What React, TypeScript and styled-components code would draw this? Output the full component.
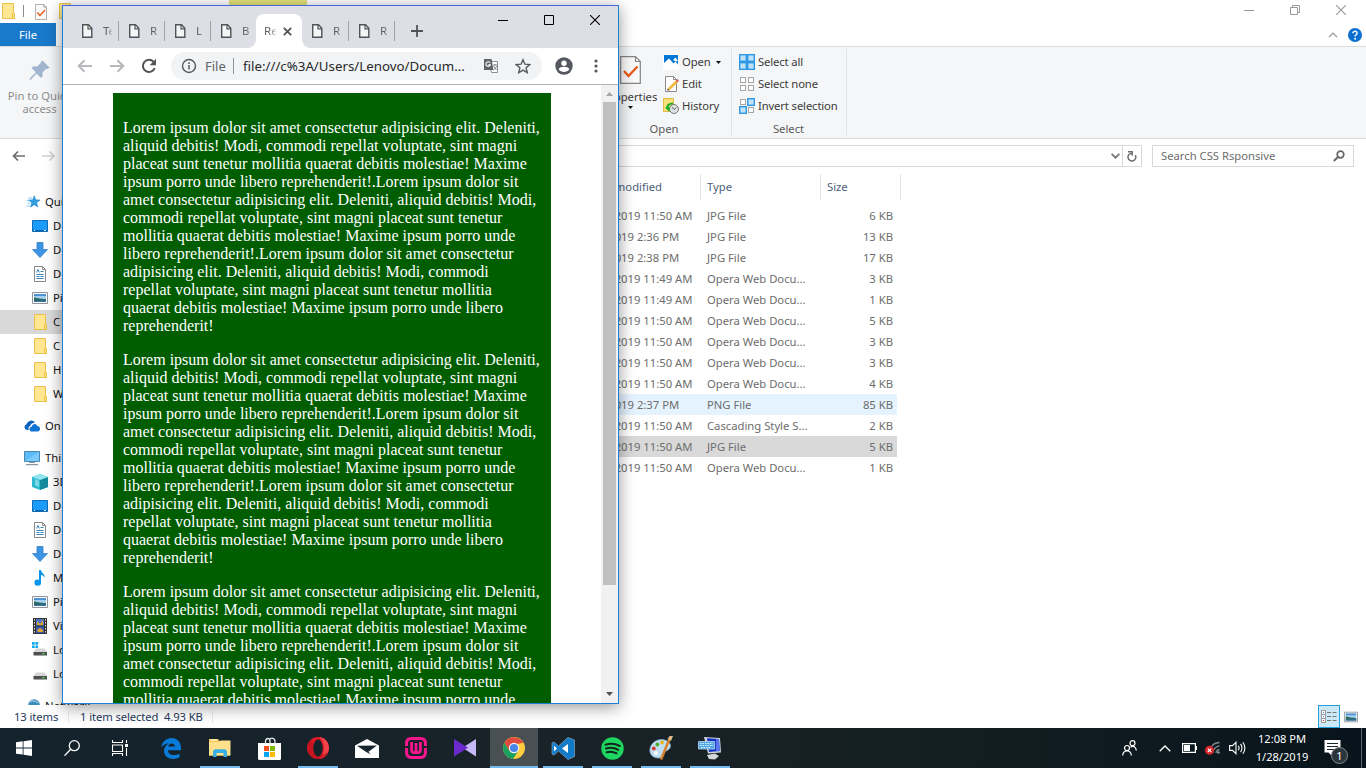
import React from 'react';
import styled, { createGlobalStyle, css } from 'styled-components';

const Global = createGlobalStyle`
  * { box-sizing: border-box; }
  body { margin: 0; overflow: hidden; background: #fff; }
  svg { display: block; flex: none; }
`;

const Desktop = styled.div`
  position: relative; width: 1366px; height: 768px; overflow: hidden;
  display: flex; flex-direction: column;
  font: 11.25px/16px 'Noto Sans', sans-serif; color: #222;
`;

/* ---------- file explorer ---------- */
const Explorer = styled.div`height: 728px; display: flex; flex-direction: column; background: #fff;`;
const TitleBar = styled.div`height: 23px; display: flex; justify-content: space-between; flex: none;`;
const QuickBar = styled.div`display: flex; align-items: flex-start; padding: 3px 0 0 0;`;
const QuickDivider = styled.div`width: 1px; height: 12px; margin: 2px 11px 0 7px; background: #8b8b8b;`;
const CheckHolder = styled.div`margin: 1px 10px 0 0;`;
const ContextTab = styled.div`width: 78px; height: 22px; margin: -3px 0 0 156px; background: #e2e278;`;
const CaptionButtons = styled.div<{ $h: number; $right: number }>`
  display: flex; height: ${p => p.$h}px; margin-right: ${p => p.$right}px;
`;
const Caption = styled.div`width: 46px; display: flex; align-items: center; justify-content: center;`;
const TabRow = styled.div`
  height: 24px; display: flex; justify-content: space-between; border-bottom: 1px solid #dadbdc; flex: none;
`;
const FileTab = styled.div`
  width: 56px; height: 23px; background: #1979ca; color: #fff; text-align: center; line-height: 23px;
`;
const HelpArea = styled.div`display: flex; align-items: center; gap: 10px; padding-right: 4px;`;
const Ribbon = styled.div`
  height: 92px; flex: none; display: flex; background: #f5f6f7; border-bottom: 1px solid #dadbdc; color: #3b3b3b;
`;
const PinButton = styled.div`
  width: 78px; padding: 13px 0 0 1px; display: flex; flex-direction: column; align-items: center;
  text-align: center; color: #8e8e8e; line-height: 13px;
  svg { margin-bottom: 8px; }
`;
const PinLabel = styled.div`white-space: nowrap;`;
const RibbonSpacer = styled.div`width: 519px;`;
const Group = styled.div<{ $w: number; $pad: number }>`
  position: relative; width: ${p => p.$w}px; margin: 2px 0 3px; padding: 2px 0 0 ${p => p.$pad}px;
  border-right: 1px solid #e2e3e4; display: grid; grid-template: 69px 18px / auto 1fr;
`;
const BigButton = styled.div`
  width: 54px; display: flex; flex-direction: column; align-items: center; padding-top: 5px; line-height: 17px;
  svg:first-child { margin-bottom: 4px; }
  svg:last-child { margin-top: 1px; }
`;
const SmallList = styled.div<{ $left: number }>`padding-left: ${p => p.$left}px;`;
const SmallButton = styled.div`height: 22px; display: flex; align-items: center; gap: 3px; white-space: nowrap; letter-spacing: -.12px;
  svg + span + svg { margin-left: 2px; }
`;
const GroupLabel = styled.div<{ $shift: number }>`
  grid-column: 1 / 3; margin-left: ${p => -p.$shift}px; text-align: center; color: #5a5a5a; line-height: 17px;
`;
const AddressRow = styled.div`height: 34px; flex: none; display: flex; padding: 6px 12px 0 0;`;
const NavArrows = styled.div`width: 74px; display: flex; gap: 14px; padding: 3px 0 0 12px;`;
const AddressBox = styled.div`
  flex: 1; height: 22px; border: 1px solid #d9d9d9; display: flex; align-items: center; justify-content: flex-end;
`;
const RefreshCell = styled.div`
  width: 19px; height: 20px; margin-left: 2px; border-left: 1px solid #d9d9d9; display: flex; align-items: center; justify-content: center;
`;
const SearchBox = styled.div`
  width: 202px; height: 22px; margin-left: 10px; border: 1px solid #d9d9d9; padding: 0 8px 0 8px; color: #6d6d6d;
  display: flex; align-items: center; justify-content: space-between;
`;
const Body = styled.div`flex: 1; min-height: 0; display: flex; overflow: hidden;`;
const Sidebar = styled.div`width: 200px; padding-top: 17px; flex: none; color: #111;`;
const SideGroup = styled.div`margin-bottom: 8px;`;
const SideItem = styled.div<{ $root?: boolean; $on?: boolean }>`
  height: 24px; display: flex; align-items: center; gap: 5px; white-space: nowrap;
  padding-left: ${p => (p.$root ? 24 : 32)}px; background: ${p => (p.$on ? '#d9d9d9' : 'transparent')};
`;
const FileList = styled.div`width: 701px; flex: none;`;
const rowGrid = css`display: grid; grid-template-columns: 380px 120px 120px 77px;`;
const HeadRow = styled.div`${rowGrid} grid-template-columns: 381px 120px 120px 80px; height: 32px; padding: 1px 0 6px; color: #4c607a; line-height: 26px;`;
const HeadCell = styled.div`border-right: 1px solid #e2e2e2; padding-left: 6px;`;
const FileRow = styled.div<{ $bg?: string }>`
  ${rowGrid} width: 697px; height: 21px; line-height: 22px; color: #6d6d6d; background: ${p => p.$bg || 'transparent'};
  white-space: nowrap;
`;
const Cell = styled.div<{ $right?: boolean }>`
  padding: 0 4px 0 7px; text-align: ${p => (p.$right ? 'right' : 'left')};
`;
const StatusBar = styled.div`height: 23px; flex: none; display: flex; align-items: center; color: #1e395b; padding: 0 8px 0 14px;`;
const StatusText = styled.div<{ $w: number }>`width: ${p => p.$w}px; white-space: nowrap; letter-spacing: -.1px;`;
const StatusLine = styled.div`width: 1px; height: 12px; background: #e8e8e8; margin-right: 11px;`;
const ViewButtons = styled.div`margin-left: auto; display: flex; align-items: center; gap: 4px;`;
const DetailsView = styled.div`
  width: 22px; height: 23px; border: 1px solid #26a0da; background: #cbe8f6; display: flex; align-items: center; justify-content: center;
`;

/* ---------- browser window ---------- */
const Browser = styled.div`
  position: absolute; left: 62px; top: 5px; width: 557px; height: 699px; background: #fff;
  border: 1px solid #1b81d8; border-top-color: #4169dc; box-shadow: 0 3px 15px rgba(0, 0, 0, .42);
  display: flex; flex-direction: column;
`;
const TabStrip = styled.div`height: 42px; flex: none; display: flex; background: #dddee6; padding-left: 9px;`;
const Tab = styled.div<{ $line?: boolean }>`
  width: 46px; height: 20px; margin-top: 15px; padding-left: 10px; display: flex; align-items: center; gap: 10px;
  border-left: ${p => (p.$line ? '1px solid #a0a2a8' : '0')};
`;
const TabTitle = styled.div<{ $w?: number }>`
  width: ${p => p.$w || 9}px; overflow: hidden; font-size: 11.5px; color: #5f6368;
  mask-image: linear-gradient(90deg, #000 50%, transparent 110%);
`;
const ActiveTab = styled.div`
  position: relative; width: 46px; margin-top: 8px; height: 34px; background: #fff; border-radius: 8px 8px 0 0;
  display: flex; align-items: center; padding-left: 8px; gap: 7px; color: #3c4043;
  &::before, &::after {
    content: ''; position: absolute; bottom: 0; width: 8px; height: 8px;
  }
  &::before { left: -8px; background: radial-gradient(circle at 0 0, transparent 7.5px, #fff 8px); }
  &::after { right: -8px; background: radial-gradient(circle at 100% 0, transparent 7.5px, #fff 8px); }
`;
const NewTab = styled.div`
  height: 20px; margin-top: 15px; border-left: 1px solid #a0a2a8; padding-left: 16px; display: flex; align-items: center; flex: 1;
`;
const Toolbar = styled.div`
  height: 37px; flex: none; display: flex; align-items: center; border-bottom: 1px solid #b4b4b4; padding-left: 14px;
`;
const NavIcons = styled.div`display: flex; gap: 16px; width: 94px;`;
const Omnibox = styled.div`
  width: 371px; height: 28px; border-radius: 14px; background: #f1f3f4; display: flex; align-items: center;
  padding: 0 10px; font-size: 13.3px; white-space: nowrap; color: #27292c;
`;
const Scheme = styled.div`width: 28px; margin-left: 8px; color: #5f6368; font-size: 13px;`;
const SchemeLine = styled.div`width: 1px; height: 16px; background: #8f9296; margin-right: 9px;`;
const Url = styled.div`width: 241px;`;
const OmniIcons = styled.div`display: flex; align-items: center; gap: 17px;`;
const RightIcons = styled.div`display: flex; align-items: center; gap: 14px; margin-left: 13px;`;
const DotsWrap = styled.div`padding-left: 7px;`;
const Page = styled.div`flex: 1; min-height: 0; display: flex; overflow: hidden;`;
const PageBody = styled.div`flex: 1; overflow: hidden; padding: 8px 50px 0;`;
const Article = styled.div`
  background: #005d00; color: #fff; padding: 10px 10.8px 10px 10px; font: 16px/18px 'Liberation Serif', serif; height: 760px;
  p { margin: 16px 0; }
`;
const Scroll = styled.div`
  width: 17px; background: #f1f1f1; display: flex; flex-direction: column; align-items: center; justify-content: space-between; padding: 7px 0 7px;
`;
const Thumb = styled.div`width: 13px; height: 483px; background: #c1c1c1; margin: 6px 0 auto;`;

/* ---------- taskbar ---------- */
const Taskbar = styled.div`
  height: 40px; flex: none; display: flex; background: linear-gradient(90deg, #14232d, #192227 45%, #152023 65%, #07141b);
`;
const Slots = styled.div`display: flex; margin-right: 3px;`;
const Apps = styled.div`display: flex; gap: 1px;`;
const Slot = styled.div<{ $open?: boolean; $active?: boolean }>`
  width: 48px; height: 40px; display: flex; align-items: center; justify-content: center;
  background:
    linear-gradient(#76b9ed, #76b9ed) center bottom / ${p => (p.$active ? '48px' : p.$open ? '40px' : '0')} 2px no-repeat
    ${p => (p.$active ? '#485054' : 'transparent')};
`;
const Tray = styled.div`margin-left: auto; display: flex; align-items: center; color: #fff;`;
const TrayItem = styled.div<{ $w: number }>`width: ${p => p.$w}px; display: flex; justify-content: center;`;
const Clock = styled.div`width: 66px; text-align: center; line-height: 18px; font-size: 11.1px;`;
const ShowDesktop = styled.div`width: 5px; height: 40px; border-left: 1px solid #5d666b; margin-left: 2px;`;

/* ---------- icons ---------- */
type IconProps = { w?: number; h?: number; box?: string; children: React.ReactNode };
const Icon = ({ w = 16, h, box, children }: IconProps) => (
  <svg width={w} height={h ?? w} viewBox={box ?? `0 0 ${w} ${h ?? w}`} fill="none">{children}</svg>
);

const Folder = () => (
  <Icon w={16}>
    <path d="M2.5.5h11v9l1 1v5h-12z" fill="#ffe693" stroke="#e9c24a" />
    <path d="M12.5 15.5v-5l1-1 1 1v5z" fill="#ffdf7a" stroke="#e9c24a" />
  </Icon>
);
const PageCheck = ({ w, h }: { w: number; h: number }) => (
  <Icon w={w} h={h} box="0 0 21 28">
    <path d="M.7.7h14.8l4.8 4.8v21.8H.7z" fill="#fafafa" stroke="#858585" strokeWidth="1.2" />
    <path d="M15.5.7v4.8h4.8" stroke="#858585" strokeWidth="1.2" />
    <path d="M4 15l4.5 5L17.5 10.5" stroke="#ea5b17" strokeWidth="2.4" />
  </Icon>
);
const Minimize = ({ c }: { c: string }) => <Icon w={10}><path d="M0 5.5h10" stroke={c} /></Icon>;
const Close = ({ c }: { c: string }) => <Icon w={10}><path d="M0 0l10 10M10 0L0 10" stroke={c} strokeWidth="1.1" /></Icon>;
const Restore = () => (
  <Icon w={10}><path d="M.5 2.5h7v7h-7zM2.5 2.5v-2h7v7h-2" stroke="#999" /></Icon>
);
const Maximize = () => <Icon w={10}><path d="M.5.5h9v9h-9z" stroke="#000" /></Icon>;
const Arrow = ({ c, flip }: { c: string; flip?: boolean }) => (
  <Icon w={16}>
    <path d={flip ? 'M1 8h13M8.5 2.2L14.3 8l-5.8 5.8' : 'M15 8H2M7.5 2.2L1.7 8l5.8 5.8'} stroke={c} strokeWidth="2" />
  </Icon>
);
const SlimArrow = ({ c, flip }: { c: string; flip?: boolean }) => (
  <Icon w={15} h={16}>
    <path d={flip ? 'M1 8h12M8.5 3.5L13 8l-4.5 4.5' : 'M13 8H1.500M6 3.5L1.500 8L6 12.500'} stroke={c} strokeWidth="1.7" />
  </Icon>
);
const Triangle = ({ c, up }: { c: string; up?: boolean }) => (
  <Icon w={7} h={4}><path d={up ? 'M0 4h7L3.5 0z' : 'M0 0h7L3.5 4z'} fill={c} /></Icon>
);
const SmallTri = () => <Icon w={5} h={3}><path d="M0 0h5L2.5 3z" fill="#111" /></Icon>;
const Pin = () => (
  <Icon w={21} box="0 0 21 21">
    <path d="M13.5.5l7 7-2 1.5-1.3-.2-3.7 3.8.2 3.7-1.7 1.7-4.5-4.4L2 19.5.5 20 1 18.3l5.8-6L2.5 8l1.8-1.7 3.7.2L12 2.7l-.2-1z" fill="#a3b5ce" />
  </Icon>
);
const OpenPic = () => (
  <Icon><path d="M0 0h16v16H0z" fill="#fff" /><path d="M1 1h14v9.5l-2.5-3-2 2L6 4.5 1 9z" fill="#0077d7" /><path d="M10 6l2.5-2.5L15 7l-2 .5z" fill="#fff" /></Icon>
);
const EditPic = () => (
  <Icon><path d="M2.5.5h8l3 3v12h-11z" fill="#fff" stroke="#8a8a8a" /><path d="M10.5.5v3h3" stroke="#8a8a8a" />
    <path d="M5.5 13.5l8.7-8.5" stroke="#f0b93c" strokeWidth="2.6" /><path d="M13.5 5.6l1.7-1.6" stroke="#d66b6b" strokeWidth="2.6" /><path d="M4.6 14.4l1-1" stroke="#555" strokeWidth="2" /></Icon>
);
const HistoryPic = () => (
  <Icon><path d="M.5.500h10v13H.5z" fill="#fde07c" stroke="#e3bd43" /><circle cx="11" cy="11" r="4.500" fill="#dfe2e4" stroke="#777" />
    <path d="M9 9l2 2.500 2.500-2" stroke="#666" /><path d="M10 5.500C5.500 5.500 3.500 8 4.500 11" stroke="#21b02b" strokeWidth="2.200" /><path d="M2 9.500l4.500 4.500.5-5z" fill="#21b02b" /></Icon>
);
const Squares = ({ mode }: { mode: 'all' | 'none' | 'invert' }) => {
  const cells = [[0, 0], [1, 0], [0, 1], [1, 1]];
  return (
    <Icon>
      {cells.map(([x, y], i) => {
        const on = mode === 'all' || (mode === 'invert' && x !== y);
        return on
          ? <rect key={i} x={x * 8 + .7} y={y * 8 + .7} width="6.6" height="6.6" fill="#bfe2fa" stroke="#2e98e4" strokeWidth="1.4" />
          : <rect key={i} x={x * 8 + 1.5} y={y * 8 + 1.5} width="5" height="5" fill="#fff" stroke="#a6a6a6" />;
      })}
    </Icon>
  );
};
const Help = () => (
  <Icon w={14}><circle cx="7" cy="7" r="7" fill="#0a6fd0" /><path d="M4.9 5.3c0-2.8 4.400-2.600 4.200 0C9 6.800 7.200 6.800 7.100 8.500" stroke="#fff" strokeWidth="1.5" /><circle cx="7.1" cy="10.7" r="1" fill="#fff" /></Icon>
);
const Star = () => (
  <Icon w={16} box="-2 -1 18 18"><path d="M9.5 1l1.700 4.600 4.800.2-3.800 3 1.300 4.900-4-2.700-4.200 2.800 1.500-4.900L3 5.800l4.800-.2z" fill="#2f9fe0" stroke="#1c7fc4" strokeWidth=".6" /><path d="M3 3.500h4M1 6.500h3M2 9.500h3M1 12.500h4" stroke="#6fc3ef" /></Icon>
);
const DesktopPic = () => (
  <Icon><path d="M.5 2.500h15v11H.5z" fill="#1a9dfa" stroke="#0c6cb8" /><path d="M1 12.500h14" stroke="#0a5ca6" /><path d="M2 12.500h1M12 12.500h2" stroke="#fff" /></Icon>
);
const Download = () => <Icon><path d="M5 .5h6v7h4.500L8 15.500.5 7.500H5z" fill="#3d94e2" stroke="#2c7fca" strokeWidth=".8" /></Icon>;
const DocPic = () => (
  <Icon><path d="M2.5.5h8l3 3v12h-11z" fill="#fff" stroke="#888" /><path d="M10.500.5v3h3" stroke="#888" /><path d="M4.500 6.500l1.500-3 1.500 3M8.500 5.500h3M4.500 8.500h7M8.500 10.500h3M4.500 10.500h3M4.500 12.500h7" stroke="#3a87b8" /></Icon>
);
const PicturePic = ({ w = 16 }: { w?: number }) => (
  <Icon w={w} box="0 0 16 16"><path d="M.5 2.500h15v11H.5z" fill="#fff" stroke="#8f9499" /><path d="M2 4h12v8H2z" fill="#a6d0f0" /><path d="M2 4h12v2H2z" fill="#4f8fd6" /><path d="M2 7.500c3 0 4 1.500 12 1.500v3H2z" fill="#2c6a62" /><path d="M2 11l12-.8V12H2z" fill="#3c6fae" /></Icon>
);
const Cloud = () => (
  <Icon><path d="M3 12a3 3 0 01-.5-5.800A4.800 4.800 0 0111 4.500c-3 .3-4.500 2-4.800 3.500C4.500 8.300 4 10.500 4.800 12z" fill="#0a63bd" /><path d="M8 13.500c-3.300 0-3.500-4.300-.3-4.700C8.200 5.300 12.500 5 13.300 8c3.500 0 3.600 5.300.5 5.500z" fill="#1274d2" /></Icon>
);
const ThisPc = () => (
  <Icon><path d="M.5 1.500h15v10H.5z" fill="#5dbcf7" stroke="#4b87ad" /><path d="M1 11L15 2v9z" fill="#8ed5ff" opacity=".6" /><path d="M5 12.500h6M2 14.700h12" stroke="#8d9aa3" strokeWidth="1.2" /></Icon>
);
const Cube = () => (
  <Icon><path d="M8 0l8 3v10l-8 3-8-3V3z" fill="#2fb9cd" /><path d="M8 6l8-3v10l-8 3z" fill="#17899d" /><path d="M0 3l8-3 8 3-8 3z" fill="#92e4ee" /><path d="M3 5l4 2v6l-4-2z" fill="#7adbe7" /></Icon>
);
const Music = () => <Icon><path d="M7 0h2c.3 3 4 3.500 3.600 8-.8-2.200-2-2.800-3.600-3v7.500A3.300 3.100 0 115.600 9.600L7 9.900z" fill="#0a96e8" /></Icon>;
const Video = () => (
  <Icon><path d="M1 0h14v16H1z" fill="#333" /><path d="M2.500 1v14M13.500 1v14" stroke="#ddd" strokeDasharray="1.5 1.5" /><path d="M4 1h8v6.500H4z" fill="#4f74c8" /><path d="M4 8.500h8V15H4z" fill="#3b58ac" /><path d="M5 3l3 3 3-4v5H5zM5 12l3-2 3 2v2H6z" fill="#dda52e" /></Icon>
);
const Drive = ({ win }: { win?: boolean }) => (
  <Icon>{win && <path d="M0 0h2.700v2.700H0zM3.400 0h2.700v2.700H3.400zM0 3.400h2.700V6H0zM3.400 3.400h2.700V6H3.400z" fill="#12a8ea" />}
    <path d="M4 6.500h8.500l2.500 3.500H1.500z" fill="#d6d6d6" /><path d="M1.500 10h13.500v3.500H1.500z" fill="#4d4f51" /><path d="M10.500 11.700h2" stroke="#54e04a" strokeWidth="1.4" /></Icon>
);
const Network = () => <Icon><circle cx="10" cy="7" r="5.800" fill="#3f8fbd" /><path d="M6 4c3-2 6-1 8 1M5 8h10" stroke="#b9e1f3" /><path d="M0 9h7v5H0z" fill="#66b8e8" /></Icon>;

const TabFile = () => (
  <Icon w={11} h={14}><path d="M.7.700h5.800L9.800 4.200v9.100H.7z" fill="#f4f5f7" stroke="#505357" strokeWidth="1.4" /><path d="M6 .8v4h3.800" stroke="#505357" strokeWidth="1.2" /></Icon>
);
const Reload = () => (
  <Icon w={16}><path d="M13.7 10.100A6.100 6.100 0 1112.600 3.900" stroke="#505357" strokeWidth="2" /><path d="M15 .8v6.400H8.600z" fill="#505357" /></Icon>
);
const Info = () => (
  <Icon w={16}><circle cx="8" cy="8" r="6.5" stroke="#55585c" strokeWidth="1.4" /><path d="M8 7v4.500M8 4.300v1.600" stroke="#55585c" strokeWidth="1.5" /></Icon>
);
const Translate = () => (
  <Icon w={14} h={14}><path d="M5 2.500h8.500v11H7.500z" fill="#fff" stroke="#8c8f93" /><path d="M0 0h7.500L9.500 11H0z" fill="#5f6368" />
    <path d="M6.200 3.900a2.300 2.300 0 10.200 2H4.300" stroke="#fff" strokeWidth="1.1" /><path d="M9 6h4M11 5v1M9.500 7l3 4M12.500 7c-.5 2-1.500 3-3 4" stroke="#777" strokeWidth=".9" /></Icon>
);
const Bookmark = () => (
  <Icon w={16}><path d="M8 1.700l1.900 4.500 4.900.4-3.700 3.200 1.100 4.800L8 12.100l-4.200 2.500 1.100-4.800L1.200 6.600l4.900-.4z" stroke="#55585c" strokeWidth="1.4" /></Icon>
);
const Account = () => (
  <Icon w={18}><circle cx="9" cy="9" r="8.7" fill="#55585f" /><circle cx="9" cy="6.2" r="2.7" fill="#fff" /><path d="M3.700 12.200c1.300-3.200 9.300-3.200 10.600 0-2.300 3.700-8.300 3.700-10.600 0z" fill="#fff" /></Icon>
);
const Dots = () => <Icon w={4} h={14}>{[2, 7, 12].map(y => <circle key={y} cx="2" cy={y} r="1.6" fill="#55585c" />)}</Icon>;

/* taskbar glyphs */
const Win = () => <Icon w={16}><path d="M0 2.300l6.700-1v6.200H0zM7.500 1.200L16 0v7.500H7.500zM0 8.400h6.700v6.200L0 13.700zM7.500 8.400H16V16l-8.500-1.200z" fill="#fff" /></Icon>;
const Search = () => <Icon w={16}><circle cx="10.300" cy="5.700" r="5" stroke="#fff" strokeWidth="1.3" /><path d="M6.700 9.300L.5 15.700" stroke="#fff" strokeWidth="1.3" /></Icon>;
const TaskView = () => <Icon w={16}><path d="M.5 0v2.500h10V0M.5 5h10v6.500H.5zM.5 16v-2.500h10V16M14.500 0v3M14.500 8v8" stroke="#fff" strokeWidth="1.1" /><path d="M13 4h3v3h-3z" fill="#fff" /></Icon>;
const Edge = () => (
  <Icon w={20} h={21}><path d="M.2 9.200C1.200 3.500 5.500 0 10.500 0 16.300 0 20 4.300 20 9.800v2.400H7c.2 5.200 7 6.200 11.500 3.200v4.200C11 23 3 20 3 12.800c0-3.300 1.900-6 4.800-7.300C4.500 5.700 2 7 .2 9.200zM7.200 8.500h6.600C13.700 4.600 7.900 4.700 7.200 8.500z" fill="#0a7ad8" /></Icon>
);
const ExplorerIcon = () => (
  <Icon w={22} h={18}><path d="M0 0h9l1.500 2H21v14.500H0z" fill="#f3c552" /><path d="M0 3h10l1.500-1.500H21.500V16.500H0z" fill="#ffe18c" /><path d="M1.500.3h6.500v1.500H1.500z" fill="#fff3c9" /><path d="M4 18v-6l1.800-1.800h10.400L18 12v6h-3.500v-4h-7v4z" fill="#39aee4" /></Icon>
);
const Store = () => (
  <Icon w={23} h={23}><path d="M0 6h23v15.500q0 1.500-1.500 1.500h-20Q0 23 0 21.500z" fill="#fff" /><path d="M7.500 7V4.500c0-4 4.500-4 4.500 0V7M11.500 3c1.500-3 5.500-2 5.500 1.500V7" stroke="#e8e8e8" strokeWidth="1.3" /><path d="M6 9h5v5H6z" fill="#f05022" /><path d="M12 9h5v5h-5z" fill="#7fba00" /><path d="M6 15h5v5H6z" fill="#00a4ef" /><path d="M12 15h5v5h-5z" fill="#ffb900" /></Icon>
);
const Opera = () => (
  <Icon w={22} h={22}><circle cx="11" cy="11" r="11" fill="#e01a25" /><path d="M11 0c14.500 0 14.500 22 0 22 8-2 8-20 0-22z" fill="#f0444a" /><path d="M4 3C-3 10 1 22 11 22c6 0 9-3 10-7l-6 3z" fill="#b70f1c" opacity=".65" /><ellipse cx="11" cy="11" rx="4.7" ry="8.5" fill="#14222a" /></Icon>
);
const Mail = () => <Icon w={24} h={19}><path d="M0 6.500L12 0l12 6.500V19H0z" fill="#fff" /><path d="M2 6.700l20-.2-8.500 6.200 2 2.800-5-3z" fill="#17242c" /></Icon>;
const Wamp = () => (
  <Icon w={22} h={22}><path d="M1.600 9V6.500c0-3.300 1.600-4.900 4.900-4.900h9c3.300 0 4.900 1.600 4.900 4.900V9M1.600 11v4.500c0 3.300 1.600 4.900 4.900 4.900h9c3.300 0 4.900-1.600 4.900-4.900V11" stroke="#fa168f" strokeWidth="3" /><path d="M6.600 5v8q0 2.700 2.700 2.700h3.400q2.700 0 2.700-2.700V5M11 6v9" stroke="#fa168f" strokeWidth="2.800" /></Icon>
);
const Bowtie = () => <Icon w={22} h={18}><path d="M22 0v17.500L8.500 8.800z" fill="#c9b8f7" /><path d="M0 0v17.500L14 8.800z" fill="#6a2acb" /></Icon>;
const Chrome = () => (
  <Icon w={22} h={22}><circle cx="11" cy="11" r="11" fill="#ffcd40" /><path d="M1.500 5.500A11 11 0 0010 22l5.500-8.200L6.500 14z" fill="#1aa15f" /><path d="M1.500 5.500l5 8.500 2-6 12-2.200A11 11 0 001.500 5.500z" fill="#e0493e" /><circle cx="11" cy="11" r="5.2" fill="#f5f5f5" /><circle cx="11" cy="11" r="4.1" fill="#4a86ea" /></Icon>
);
const VsCode = () => (
  <Icon w={24} h={23}><path d="M17 .5l6.500 2.500v16.500L17 22.500 7.500 14 3 18l-2-1V6l2-1 4.500 4z" fill="#127bc9" stroke="#7fa7c4" strokeWidth=".7" /><path d="M17 7v9l-6-4.500zM3 8.500l3 3-3 3z" fill="#fff" /></Icon>
);
const Spotify = () => (
  <Icon w={23} h={23}><circle cx="11.5" cy="11.5" r="11.2" fill="#1ed760" /><path d="M4.500 7.700c5-1.500 10-1 14.300 1.300M5 11.500c4.500-1.300 8.500-.8 12.300 1.300M5.600 15.200c3.700-1 7-.6 10 1.100" stroke="#17231f" strokeWidth="2" strokeLinecap="round" /></Icon>
);
const Paint = () => (
  <Icon w={24} h={24}><path d="M1 13C2 5 12 1 18 5c5 3 4 7 1 9-2 1.300-4 1-4 3 0 3-2 5-6 5-5 0-9-4-8-9z" fill="#bfe0f2" stroke="#7ca8c3" strokeWidth=".8" /><circle cx="4.8" cy="12.5" r="1.9" fill="#d6392c" /><circle cx="8.3" cy="8.5" r="1.9" fill="#54a936" /><circle cx="13" cy="6.500" r="1.9" fill="#e6b322" /><circle cx="7" cy="17" r="2" fill="#fff" /><path d="M12 23.500L20.500 3" stroke="#d9822e" strokeWidth="2.6" /><path d="M18.500 3l2-3h3.500l-2 5z" fill="#ddb98b" /></Icon>
);
const Remote = () => (
  <Icon w={24} h={23}><path d="M6 0l16 1 1 14.500-13 1z" fill="#cfd6df" /><path d="M9 1.200l12 .8.800 12L11 15z" fill="#142ec4" /><path d="M18 1.800l3 .2.800 12-4 .3z" fill="#5876ee" /><path d="M9 18l8-1.500 4 2.500-4 3.500-6-.5z" fill="#d4d7da" /><path d="M.5 4.500h16v7.500H.5z" fill="#4fa7e4" stroke="#b8dbf3" strokeWidth=".8" /><path d="M2 6.500h13M2 8.500h13M3 10.500h10" stroke="#def" strokeDasharray="1.5 1" /></Icon>
);
const People = () => (
  <Icon w={15} h={16}><circle cx="5" cy="8" r="2.5" stroke="#fff" strokeWidth="1.2" /><path d="M.7 15.500c.3-6 8.300-6 8.600 0" stroke="#fff" strokeWidth="1.2" /><circle cx="10.5" cy="3.2" r="2.5" stroke="#fff" strokeWidth="1.2" /><path d="M8.500 7.200c3-2 5.500 0 5.800 3.300" stroke="#fff" strokeWidth="1.2" /></Icon>
);
const Battery = () => <Icon w={15} h={10}><path d="M.6.6h12.800v8.800H.6zM14.500 3v4" stroke="#fff" strokeWidth="1.2" /><path d="M2 2h6v6H2z" fill="#fff" /></Icon>;
const Wifi = () => (
  <Icon w={16} h={14}><path d="M4.500 12A10 10 0 0114.500 1.500M8 12a7 7 0 016.500-7M11 12a4 4 0 013.500-3.500" stroke="#7d868b" strokeWidth="1.3" /><circle cx="13.5" cy="11.5" r="1.3" fill="#8d9599" /><circle cx="4.5" cy="9.3" r="4.5" fill="#d8242c" /><path d="M2.800 7.600l3.400 3.400M6.200 7.600L2.800 11" stroke="#fff" strokeWidth="1.1" /></Icon>
);
const Speaker = () => <Icon w={17} h={14}><path d="M.6 4.600h2.900L7 1.300v11.400L3.500 9.400H.6z" stroke="#fff" strokeWidth="1.1" /><path d="M9.300 4.700q1.500 2.300 0 4.600M11.600 2.900q2.700 4.100 0 8.200M13.900 1.200q4 5.800 0 11.600" stroke="#fff" strokeWidth="1.1" /></Icon>;
const NoticeWrap = styled.div`position: relative; width: 26px; height: 17px;`;
const NoticeBadge = styled.div`
  position: absolute; left: 7px; top: 7px; width: 17px; height: 17px; border-radius: 50%; background: #2b363c;
  border: 1px solid #7f878b; color: #fff; font-size: 11px; line-height: 15px; text-align: center;
`;

const chunk = 'Lorem ipsum dolor sit amet consectetur adipisicing elit. Deleniti, aliquid debitis! Modi, commodi repellat voluptate, sint magni placeat sunt tenetur mollitia quaerat debitis molestiae! Maxime ipsum porro unde libero reprehenderit!';
const paragraph = [chunk, chunk, chunk].join('.');

const files = [
  ['1/25/2019 11:50 AM', 'JPG File', '6 KB'],
  ['1/9/2019 2:36 PM', 'JPG File', '13 KB'],
  ['1/9/2019 2:38 PM', 'JPG File', '17 KB'],
  ['1/25/2019 11:49 AM', 'Opera Web Docu...', '3 KB'],
  ['1/25/2019 11:49 AM', 'Opera Web Docu...', '1 KB'],
  ['1/25/2019 11:50 AM', 'Opera Web Docu...', '5 KB'],
  ['1/25/2019 11:50 AM', 'Opera Web Docu...', '3 KB'],
  ['1/25/2019 11:50 AM', 'Opera Web Docu...', '3 KB'],
  ['1/25/2019 11:50 AM', 'Opera Web Docu...', '4 KB'],
  ['1/9/2019 2:37 PM', 'PNG File', '85 KB', '#e5f3ff'],
  ['1/25/2019 11:50 AM', 'Cascading Style S...', '2 KB'],
  ['1/25/2019 11:50 AM', 'JPG File', '5 KB', '#d9d9d9'],
  ['1/25/2019 11:50 AM', 'Opera Web Docu...', '1 KB'],
];

const quick: [React.ReactNode, string, boolean?][] = [
  [<DesktopPic />, 'D'], [<Download />, 'D'], [<DocPic />, 'D'], [<PicturePic />, 'Pi'],
  [<Folder />, 'C', true], [<Folder />, 'C'], [<Folder />, 'H'], [<Folder />, 'W'],
];
const pc: [React.ReactNode, string][] = [
  [<Cube />, '3D'], [<DesktopPic />, 'D'], [<DocPic />, 'D'], [<Download />, 'D'], [<Music />, 'M'],
  [<PicturePic />, 'Pi'], [<Video />, 'Vi'], [<Drive win />, 'Lo'], [<Drive />, 'Lo'],
];

const BrowserTab = ({ title, line }: { title: string; line?: boolean }) => (
  <Tab $line={line}><TabFile /><TabTitle>{title}</TabTitle></Tab>
);

export default function App() {
  return (
    <Desktop>
      <Global />
      <Explorer>
        <TitleBar>
          <QuickBar>
            <Folder /><QuickDivider /><CheckHolder><PageCheck w={12} h={16} /></CheckHolder><Folder />
            <ContextTab />
          </QuickBar>
          <CaptionButtons $h={20} $right={2}>
            <Caption><Minimize c="#999" /></Caption><Caption><Restore /></Caption><Caption><Close c="#999" /></Caption>
          </CaptionButtons>
        </TitleBar>
        <TabRow>
          <FileTab>File</FileTab>
          <HelpArea>
            <Icon w={10} h={6}><path d="M1 5l4-4 4 4" stroke="#999" strokeWidth="1.2" /></Icon><Help />
          </HelpArea>
        </TabRow>
        <Ribbon>
          <PinButton><Pin /><PinLabel>Pin to Quick</PinLabel><PinLabel>access</PinLabel></PinButton>
          <RibbonSpacer />
          <Group $w={135} $pad={6}>
            <BigButton><PageCheck w={21} h={28} /><span>Properties</span><SmallTri /></BigButton>
            <SmallList $left={6}>
              <SmallButton><OpenPic /><span>Open</span><SmallTri /></SmallButton>
              <SmallButton><EditPic /><span>Edit</span></SmallButton>
              <SmallButton><HistoryPic /><span>History</span></SmallButton>
            </SmallList>
            <GroupLabel $shift={6}>Open</GroupLabel>
          </Group>
          <Group $w={115} $pad={7}>
            <SmallList $left={0}>
              <SmallButton><Squares mode="all" /><span>Select all</span></SmallButton>
              <SmallButton><Squares mode="none" /><span>Select none</span></SmallButton>
              <SmallButton><Squares mode="invert" /><span>Invert selection</span></SmallButton>
            </SmallList>
            <GroupLabel $shift={8}>Select</GroupLabel>
          </Group>
        </Ribbon>
        <AddressRow>
          <NavArrows><SlimArrow c="#6d6d6d" /><SlimArrow c="#d0d0d0" flip /></NavArrows>
          <AddressBox>
            <Icon w={9} h={6}><path d="M.6.800l3.900 3.900 3.900-3.900" stroke="#777" strokeWidth="1.8" /></Icon>
            <RefreshCell>
              <Icon w={10} h={11}><path d="M5 2.200a3.900 3.900 0 11-3.300 2" stroke="#707070" strokeWidth="1.5" transform="translate(10 0) scale(-1 1)" /><path d="M1 .800h4.200v4" stroke="#707070" strokeWidth="1.5" /></Icon>
            </RefreshCell>
          </AddressBox>
          <SearchBox>
            <span>Search CSS Rsponsive</span>
            <Icon w={12}><circle cx="7.5" cy="4.5" r="3.3" stroke="#666" strokeWidth="1.7" /><path d="M5 7L.8 11" stroke="#666" strokeWidth="2" /></Icon>
          </SearchBox>
        </AddressRow>
        <Body>
          <Sidebar>
            <SideGroup>
              <SideItem $root><Star />Qui</SideItem>
              {quick.map(([icon, label, on], i) => <SideItem key={i} $on={on}>{icon}{label}</SideItem>)}
            </SideGroup>
            <SideGroup><SideItem $root><Cloud />On</SideItem></SideGroup>
            <SideGroup>
              <SideItem $root><ThisPc />Thi</SideItem>
              {pc.map(([icon, label], i) => <SideItem key={i}>{icon}{label}</SideItem>)}
            </SideGroup>
            <SideItem $root><Network />Network</SideItem>
          </Sidebar>
          <FileList>
            <HeadRow><HeadCell /><HeadCell>Date modified</HeadCell><HeadCell>Type</HeadCell><HeadCell>Size</HeadCell></HeadRow>
            {files.map(([date, type, size, bg], i) => (
              <FileRow key={i} $bg={bg}><span /><Cell>{date}</Cell><Cell>{type}</Cell><Cell $right>{size}</Cell></FileRow>
            ))}
          </FileList>
        </Body>
        <StatusBar>
          <StatusText $w={54}>13 items</StatusText><StatusLine />
          <StatusText $w={84}>1 item selected</StatusText><StatusText $w={48}>4.93 KB</StatusText><StatusLine />
          <ViewButtons>
            <DetailsView>
              <Icon w={16} h={14}><path d="M.5.5h4v4h-4zM.5 4.500h4v4h-4zM.5 8.500h4v4h-4z" fill="#fff" stroke="#999" /><path d="M2 2.500h1M2 6.500h1" stroke="#3d8bd0" /><path d="M2 10.500h1" stroke="#d33" /><path d="M6 2.500h4M11.500 2.500h4M6 6.500h4M11.500 6.500h4M6 10.500h4M11.500 10.500h4" stroke="#777" /></Icon>
            </DetailsView>
            <PicturePic w={14} />
          </ViewButtons>
        </StatusBar>
      </Explorer>

      <Browser>
        <TabStrip>
          <BrowserTab title="Te" /><BrowserTab title="R" line /><BrowserTab title="L" line /><BrowserTab title="B" line />
          <ActiveTab>
            <TabTitle $w={12}>Re</TabTitle>
            <Icon w={9}><path d="M.8.8l7.400 7.400M8.200.8L.8 8.200" stroke="#505357" strokeWidth="1.8" /></Icon>
          </ActiveTab>
          <BrowserTab title="R" /><BrowserTab title="R" line />
          <NewTab><Icon w={12}><path d="M6 0v12M0 6h12" stroke="#505357" strokeWidth="1.8" /></Icon></NewTab>
          <CaptionButtons $h={28} $right={0}>
            <Caption><Minimize c="#000" /></Caption><Caption><Maximize /></Caption><Caption><Close c="#000" /></Caption>
          </CaptionButtons>
        </TabStrip>
        <Toolbar>
          <NavIcons><Arrow c="#b6b8bb" /><Arrow c="#b6b8bb" flip /><Reload /></NavIcons>
          <Omnibox>
            <Info /><Scheme>File</Scheme><SchemeLine /><Url>file:///c%3A/Users/Lenovo/Docum...</Url>
            <OmniIcons><Translate /><Bookmark /></OmniIcons>
          </Omnibox>
          <RightIcons><Account /><DotsWrap><Dots /></DotsWrap></RightIcons>
        </Toolbar>
        <Page>
          <PageBody><Article><p>{paragraph}</p><p>{paragraph}</p><p>{paragraph}</p></Article></PageBody>
          <Scroll><Triangle c="#a3a3a3" up /><Thumb /><Triangle c="#505050" /></Scroll>
        </Page>
      </Browser>

      <Taskbar>
        <Slots><Slot><Win /></Slot><Slot><Search /></Slot><Slot><TaskView /></Slot></Slots>
        <Apps>
          <Slot><Edge /></Slot><Slot $open><ExplorerIcon /></Slot><Slot><Store /></Slot><Slot $open><Opera /></Slot>
          <Slot><Mail /></Slot><Slot><Wamp /></Slot><Slot><Bowtie /></Slot><Slot $open $active><Chrome /></Slot>
          <Slot $open><VsCode /></Slot><Slot $open><Spotify /></Slot><Slot $open><Paint /></Slot><Slot $open><Remote /></Slot>
        </Apps>
        <Tray>
          <TrayItem $w={48}><People /></TrayItem>
          <TrayItem $w={24}><Icon w={12} h={7}><path d="M.7 6.300L6 1l5.300 5.300" stroke="#fff" strokeWidth="1.3" /></Icon></TrayItem>
          <TrayItem $w={24}><Battery /></TrayItem>
          <TrayItem $w={24}><Wifi /></TrayItem>
          <TrayItem $w={24}><Speaker /></TrayItem>
          <Clock>12:08 PM<br />1/28/2019</Clock>
          <TrayItem $w={44}>
            <NoticeWrap>
              <Icon w={17} h={17}><path d="M.5 0h16v12.500H8V16l-3.500-3.500h-4z" fill="#fff" /><path d="M3 3.500h11M3 6.500h11M3 9.500h7" stroke="#17242b" /></Icon>
              <NoticeBadge>1</NoticeBadge>
            </NoticeWrap>
          </TrayItem>
          <ShowDesktop />
        </Tray>
      </Taskbar>
    </Desktop>
  );
}
